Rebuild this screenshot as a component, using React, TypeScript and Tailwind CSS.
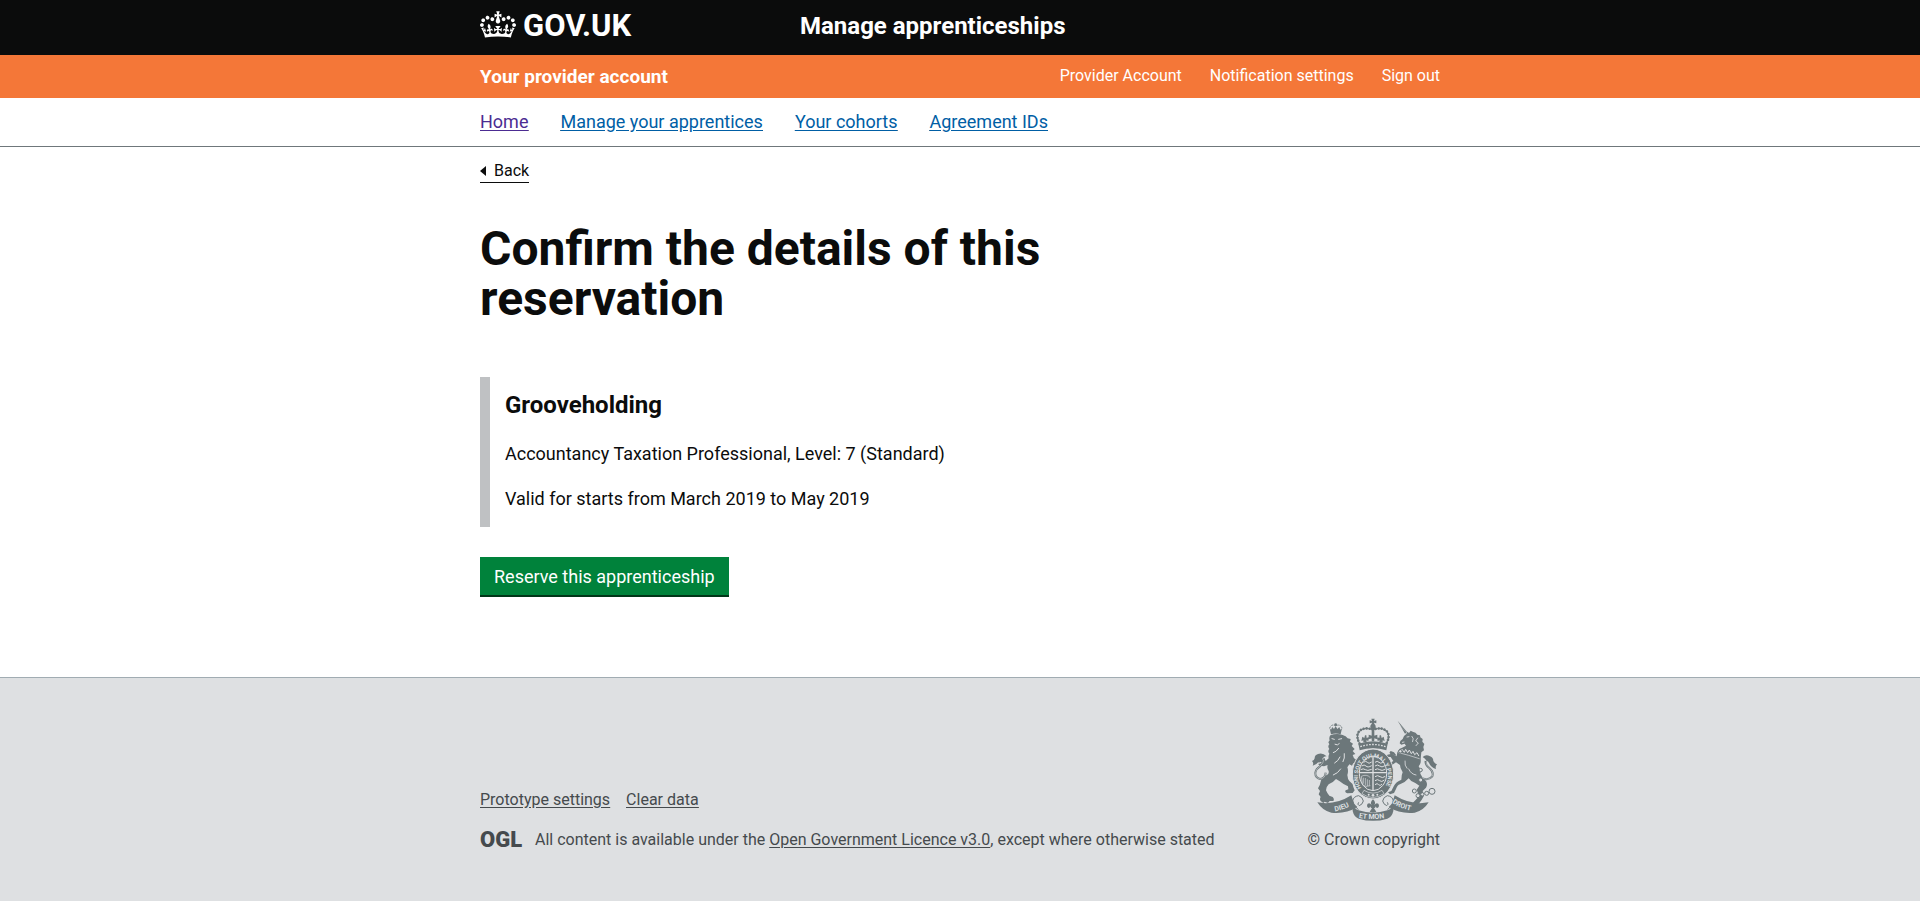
import React from "react";

const container = "mx-auto w-full max-w-[960px]";

function CrownLogo() {
  return (
    <svg viewBox="0 0 132 97" className="h-[27px] w-9 shrink-0 fill-white" aria-hidden="true">
      <path
        fillRule="evenodd"
        d="M25 30.2c3.5 1.5 7.7-.2 9.1-3.7 1.5-3.6-.2-7.8-3.9-9.2-3.6-1.4-7.6.3-9.1 3.9-1.4 3.5.3 7.5 3.9 9zM9 39.5c3.6 1.5 7.8-.2 9.2-3.7 1.5-3.6-.2-7.8-3.9-9.1-3.6-1.5-7.6.2-9.1 3.8-1.4 3.5.3 7.5 3.8 9zM4.4 57.2c3.5 1.5 7.7-.2 9.1-3.8 1.5-3.6-.2-7.7-3.9-9.1-3.5-1.5-7.6.3-9.1 3.8-1.4 3.5.3 7.6 3.9 9.1zm38.3-21.4c3.5 1.5 7.7-.2 9.1-3.8 1.5-3.6-.2-7.7-3.9-9.1-3.6-1.5-7.6.3-9.1 3.8-1.3 3.6.4 7.7 3.9 9.1zm64.4-5.6c-3.6 1.5-7.8-.2-9.1-3.7-1.5-3.6.2-7.8 3.8-9.2 3.6-1.4 7.7.3 9.2 3.9 1.3 3.5-.4 7.5-3.9 9zm15.9 9.3c-3.6 1.5-7.7-.2-9.1-3.7-1.5-3.6.2-7.8 3.7-9.1 3.6-1.5 7.7.2 9.2 3.8 1.5 3.5-.3 7.5-3.8 9zm4.7 17.7c-3.6 1.5-7.8-.2-9.2-3.8-1.5-3.6.2-7.7 3.9-9.1 3.6-1.5 7.7.3 9.2 3.8 1.3 3.5-.4 7.6-3.9 9.1zM89.3 35.8c-3.6 1.5-7.8-.2-9.2-3.8-1.4-3.6.2-7.7 3.9-9.1 3.6-1.5 7.7.3 9.2 3.8 1.4 3.6-.3 7.7-3.9 9.1zM69.7 17.7l8.9 4.7V9.3l-8.9 2.8c-.2-.3-.5-.6-.9-.9L72.4 0H59.6l3.5 11.2c-.3.3-.6.5-.9.9l-8.8-2.8v13.1l8.8-4.7c.3.3.6.7.9.9l-5 15.4v.1c-.2.8-.4 1.6-.4 2.4 0 4.1 3.1 7.5 7 8.1h.2c.3 0 .7.1 1 .1.4 0 .7 0 1-.1h.2c4-.6 7.1-4.1 7.1-8.1 0-.8-.1-1.7-.4-2.4V34l-5.1-15.4c.4-.2.7-.6 1-.9zM66 92.8c16.9 0 32.8 1.1 47.1 3.2 4-16.9 8.9-26.7 14-33.5l-9.6-3.4c1 4.9 1.1 7.2 0 10.2-1.5-1.4-3-4.3-4.2-8.7L108.6 76c2.8-2 5-3.2 7.5-3.3-4.4 9.4-10 11.9-13.6 11.2-4.3-.8-6.3-4.6-5.6-7.9 1-4.7 5.7-5.9 8-.5 4.3-8.7-3-11.4-7.6-8.8 7.1-7.2 7.9-13.5 2.1-21.1-8 6.1-8.1 12.3-4.5 20.8-4.7-5.4-12.1-2.5-9.5 6.2 3.4-5.2 7.9-2 7.2 3.1-.6 4.3-6.4 7.8-13.5 7.2-10.3-.9-10.9-8-11.2-13.8 2.5-.5 7.1 1.8 11 7.3L80.2 60c-4.1 4.4-8 5.3-12.3 5.4 1.4-4.4 8-11.6 8-11.6H55.5s6.4 7.2 7.9 11.6c-4.2-.1-8-1-12.3-5.4l1.4 16.4c3.9-5.5 8.5-7.7 10.9-7.3-.3 5.8-.9 12.8-11.1 13.8-7.2.6-12.9-2.9-13.5-7.2-.7-5 3.8-8.3 7.1-3.1 2.7-8.7-4.6-11.6-9.4-6.2 3.7-8.5 3.6-14.7-4.6-20.8-5.8 7.6-5 13.9 2.2 21.1-4.7-2.6-11.9.1-7.7 8.8 2.3-5.5 7.1-4.2 8.1.5.7 3.3-1.3 7.1-5.7 7.9-3.5.7-9-1.8-13.5-11.2 2.5.1 4.7 1.3 7.5 3.3l-4.7-15.4c-1.2 4.4-2.7 7.2-4.3 8.7-1.1-3-.9-5.3 0-10.2l-9.5 3.4c5 6.9 9.9 16.7 14 33.5 14.8-2.1 30.8-3.2 47.7-3.2z"
      />
    </svg>
  );
}

function RoyalArms() {
  const ink = "#6c777a";
  const paper = "#dee0e2";
  return (
    <svg viewBox="60 55 390 312" className="h-[104px] w-[130px]" aria-hidden="true" fontFamily="Roboto, sans-serif" fontWeight="700">
      {/* lion */}
      <g fill={ink}>
        <path d="M119 86l4 4 4-8 5 6 5-9 5 9 6-6 3 8 5-4-4 18q-15-5-29 0z" />
        <circle cx="137" cy="75" r="4" />
        <path d="M119 86q4-14 18-8q15-6 19 8" fill="none" stroke={ink} strokeWidth="3" strokeDasharray="4 2" />
        <path d="M121 107Q140 100 158 106Q168 108 173 116L182 118L180 126L189 132L185 139L194 148L188 154L196 163L188 166L192 176L199 180L204 188L197 186L196 194L190 190L186 198L178 194L172 203Q176 214 172 226Q173 238 178 244Q188 250 190 262L194 272L188 280L172 281Q163 278 167 272L175 269L174 260Q160 254 148 244L138 238Q128 250 116 254Q108 262 108 272Q112 282 118 288L128 292Q134 298 130 304L119 304L114 310L104 306L100 310L92 304Q88 298 92 292L86 284L90 274L84 266Q90 258 92 246Q94 234 106 228Q118 224 116 214Q110 206 113 196L102 200L90 198L84 193L96 190L88 184L94 178L108 183L116 176Q114 168 118 162Q112 154 118 148Q112 140 118 134L115 128L119 122Q116 114 121 107Z" />
      </g>
      <g stroke={paper} fill="none" strokeWidth="3" strokeLinecap="round">
        <path d="M126 117l7 2M146 119l9-2M135 134q8 5 13-2M146 146q-8 12-16 13M150 172q-5 12-16 18M163 162q2 14-4 24M152 208q-8 13-22 18" />
      </g>
      <path d="M107 219Q106 237 90 238Q75 234 76 219Q78 207 90 200Q103 189 102 176" fill="none" stroke={ink} strokeWidth="6" />
      <path d="M107 219Q106 237 90 238Q75 234 76 219Q78 207 90 200Q101 190 101 180" fill="none" stroke={paper} strokeWidth="1.5" />
      <path d="M110 170Q98 158 84 163Q74 166 74 176Q72 184 66 184Q72 190 68 198Q80 196 84 188Q94 190 97 177Q103 169 110 170Z" fill={ink} />

      {/* unicorn */}
      <path d="M323 63L351 97L345 102Z" fill={ink} />
      <path d="M324 70l23 26" stroke={paper} strokeWidth="1" />
      <g fill={ink}>
        <path d="M349 103L352 96L357 100L362 93L368 96Q378 98 382 105L390 107L391 113L398 118L397 126L403 133L400 142L402 152L394 158L392 178Q394 192 386 200Q394 210 391 222Q396 234 408 244Q414 254 408 264L398 274L402 288Q396 300 388 310L374 314L368 310L376 302Q384 296 386 286L380 270L388 258L376 250Q362 246 356 236Q344 250 330 254Q322 256 318 268L312 280L300 284L294 278L304 274L312 258Q318 246 334 240Q334 226 338 218Q330 206 330 196L318 188L306 196L296 200L300 190L310 184L302 172L290 172L292 165L306 162L320 170L322 158L328 148Q338 144 348 138L344 132L334 135L329 131L331 124L338 118Q340 108 349 103Z" />
        <path d="M300 162q-4-5 2-8l10 4 8 10z" />
      </g>
      <g fill="none" stroke={paper} strokeWidth="2.5" strokeLinecap="round">
        <path d="M351 112l6-1M337 128l5-1M383 115l-6 9 8 6-7 8M366 110q7 6 2 16" />
        <path d="M327 151l6 5 3-7 7 9 4-9 6 10 5-8 6 11 5-7 5 10 7-6 5 9" strokeWidth="3" />
        <path d="M326 159q29 7 62 18" strokeWidth="2" />
        <path d="M356 208q7 16 22 18M345 184q-2 14 6 22" />
      </g>
      <path d="M398 236Q416 243 427 230Q432 217 418 205Q405 195 407 184" fill="none" stroke={ink} strokeWidth="6" />
      <path d="M398 236Q416 243 427 230Q432 217 418 205Q408 196 408 188" fill="none" stroke={paper} strokeWidth="1.5" />
      <path d="M398 172Q408 163 420 170Q430 173 430 184Q434 192 441 194Q435 200 438 208Q424 204 419 194Q414 182 410 184Q406 176 398 172Z" fill={ink} />
      <g fill={paper} stroke={ink} strokeWidth="3">
        <circle cx="331" cy="155" r="5" />
        <circle cx="392" cy="211" r="5" />
        <circle cx="392" cy="241" r="6" />
        <circle cx="373" cy="274" r="6" />
        <circle cx="384" cy="288" r="6" />
        <circle cx="397" cy="284" r="5" />
        <circle cx="410" cy="281" r="6" />
        <circle cx="426" cy="275" r="9" />
      </g>

      {/* crown */}
      <g fill={ink}>
        <path d="M244 57h10l-2 7 7-2v9l-7-2 3 9h-12l3-9-7 2v-9l7 2z" />
        <circle cx="249" cy="81" r="8" />
        <path d="M205 132q44-15 88 0l-4 20q-40-13-80 0z" />
        <path d="M245 86h8v37h-8z" />
        <path d="M236 105l10 3v-8h6v8l10-3v14l-10-3v8h-6v-8l-10 3zM217 111l6 4 2-8h4l1 8 7-3-2 12-6-2 1 6h-10v-6l-6 2zM281 111l-6 4-2-8h-4l-1 8-7-3 2 12 6-2-1 6h10v-6l6 2z" />
      </g>
      <g fill="none" stroke={ink}>
        <path d="M209 132Q197 110 206 97Q220 80 249 90Q278 80 292 97Q301 110 289 132" strokeWidth="3" />
        <path d="M209 132Q197 110 206 97Q220 80 249 90Q278 80 292 97Q301 110 289 132" strokeWidth="8" strokeLinecap="round" strokeDasharray="0.1 9" />
      </g>
      <path d="M211 141q38-13 76 0" fill="none" stroke={paper} strokeWidth="4" strokeDasharray="5 4" />

      {/* garter and shield */}
      <ellipse cx="249" cy="223" rx="62" ry="75" fill={ink} stroke={paper} strokeWidth="3" />
      <ellipse cx="249" cy="221" rx="41" ry="52" fill={ink} stroke={paper} strokeWidth="3" />
      <path id="garter" d="M214 265A45 56 0 1 1 284 265" fill="none" />
      <text fontSize="17" fill={paper}>
        <textPath href="#garter">HONI SOIT QUI MAL Y PENSE</textPath>
      </text>
      <g fill="none" stroke={paper} strokeWidth="3">
        <path d="M249 169v104M208 219h82" strokeWidth="4" />
        <path d="M220 188q8-6 12 0t13-1M215 199q8-6 13 0t17-1M212 210q8-5 14 0t19-1" />
        <path d="M255 188q7-6 12 0t12-1M255 199q8-6 14 0t16-1M255 210q8-5 14 0t17-1" />
        <path d="M217 253l-3-23q16-8 27 4M220 252v-18M226 257v-22M232 259v-20M238 258v-17M217 255q9 9 24 3" strokeWidth="2" />
        <path d="M255 231q8-6 15 0t16-1M255 243q8-6 14 0t14-2M255 255q7-6 11 0t10-2" />
      </g>
      <path d="M222 272q27 17 54 0l6 10q-34 23-66 0z" fill={ink} stroke={paper} strokeWidth="2" />
      <g fill={paper}>
        <circle cx="236" cy="285" r="3" />
        <circle cx="249" cy="287" r="4" />
        <circle cx="262" cy="285" r="3" />
      </g>

      {/* motto ribbon */}
      <g fill={paper} stroke={ink} strokeWidth="3">
        <path d="M205 330Q190 318 188 304Q190 290 206 288Q218 292 220 304Q218 314 208 318Q200 314 206 308" />
        <path d="M293 330Q308 318 310 304Q308 290 292 288Q280 292 278 304Q280 314 290 318Q298 314 292 308" />
      </g>
      <g fill={ink}>
        <path d="M82 308Q135 318 184 287L192 312L202 322Q166 344 124 339Q98 334 82 308Z" />
        <path d="M416 308Q363 318 314 287L306 312L296 322Q332 344 374 339Q400 334 416 308Z" />
        <path d="M188 304Q192 330 206 332Q249 346 292 332Q306 330 310 304L310 334Q306 352 292 357Q249 370 206 357Q192 352 188 334Z" />
      </g>
      <path id="ribbon-left" d="M135 335q31-5 58-24" fill="none" />
      <path id="ribbon-right" d="M306 309q25 19 68 26" fill="none" />
      <path id="ribbon-middle" d="M206 354q43 9 92-1" fill="none" />
      <g fontSize="21" fill={paper}>
        <text><textPath href="#ribbon-left">DIEU</textPath></text>
        <text><textPath href="#ribbon-right">DROIT</textPath></text>
        <text><textPath href="#ribbon-middle">ET MON</textPath></text>
      </g>
      <path d="M249 299Q259 308 253 317Q258 308 265 312Q270 320 262 325Q257 325 258 320Q255 326 252 326L259 336L249 339L239 336L246 326Q243 326 240 320Q241 325 236 325Q228 320 233 312Q240 308 245 317Q239 308 249 299Z" fill={ink} />
    </svg>
  );
}

const accountLinks = ["Provider Account", "Notification settings", "Sign out"];

const sections = [
  { label: "Home", visited: true },
  { label: "Manage your apprentices", visited: false },
  { label: "Your cohorts", visited: false },
  { label: "Agreement IDs", visited: false },
];

export default function App() {
  return (
    <div className="flex min-h-screen flex-col bg-white font-[Roboto,'Liberation_Sans',sans-serif] text-[18px] leading-[25px] text-[#0b0c0c]">
      <header>
        <div className="bg-[#0b0c0c] text-white">
          <div className={`${container} flex h-[55px] items-start pt-2`}>
            <div className="w-1/3">
              <a href="#" className="inline-flex items-start gap-[7px] text-[31px] leading-9 font-bold">
                <span className="pt-[3px]"><CrownLogo /></span>
                GOV.UK
              </a>
            </div>
            <a href="#" className="text-2xl leading-9 font-bold">Manage apprenticeships</a>
          </div>
        </div>

        <div className="bg-[#f47738] text-white">
          <div className={`${container} flex h-[43px] items-center justify-between pb-px`}>
            <a href="#" className="text-[19px] font-bold">Your provider account</a>
            <nav aria-label="Account" className="flex gap-7 text-base">
              {accountLinks.map((label) => (
                <a key={label} href="#">{label}</a>
              ))}
            </nav>
          </div>
        </div>

        <div className="border-b border-[#6f777b]">
          <nav aria-label="Sections" className={`${container} flex h-12 items-center gap-8 pb-0.5 underline underline-offset-2`}>
            {sections.map(({ label, visited }) => (
              <a key={label} href="#" className={visited ? "text-[#4c2c92]" : "text-[#005ea5]"}>{label}</a>
            ))}
          </nav>
        </div>
      </header>

      <main className={`${container} pb-20`}>
        <a href="#" className="mt-[14px] inline-flex items-center gap-2 border-b border-[#0b0c0c] pb-0.5 text-base leading-[19px]">
          <svg viewBox="0 0 6 10" className="h-2.5 w-1.5" aria-hidden="true">
            <path d="M0 5l6-5v10z" fill="#0b0c0c" />
          </svg>
          Back
        </a>

        <div className="w-2/3 pt-[41px]">
          <h1 className="text-5xl leading-[50px] font-bold">Confirm the details of this reservation</h1>

          <section className="mt-[53px] border-l-10 border-[#bfc1c3] px-[15px] pt-4 pb-4">
            <h2 className="mb-[23px] text-2xl leading-[25px] font-bold">Grooveholding</h2>
            <p className="mb-5">Accountancy Taxation Professional, Level: 7 (Standard)</p>
            <p>Valid for starts from March 2019 to May 2019</p>
          </section>

          <button type="button" className="mt-[30px] h-10 border-b-2 border-[#003618] bg-[#00823b] px-[14px] text-white">
            Reserve this apprenticeship
          </button>
        </div>
      </main>

      <footer className="grow border-t border-[#a1acb2] bg-[#dee0e2] pt-10 pb-10 text-base leading-5 text-[#454a4d]">
        <div className={`${container} flex items-end justify-between`}>
          <div>
            <div className="mb-5 flex gap-4 underline underline-offset-2">
              <a href="#">Prototype settings</a>
              <a href="#">Clear data</a>
            </div>
            <div className="flex items-center gap-[14px]">
              <span className="w-[41px] text-[22px] font-black">OGL</span>
              <span>
                All content is available under the{" "}
                <a href="#" className="underline underline-offset-2">Open Government Licence v3.0</a>, except where otherwise stated
              </span>
            </div>
          </div>
          <a href="#" className="flex flex-col items-end gap-2">
            <RoyalArms />
            © Crown copyright
          </a>
        </div>
      </footer>
    </div>
  );
}
